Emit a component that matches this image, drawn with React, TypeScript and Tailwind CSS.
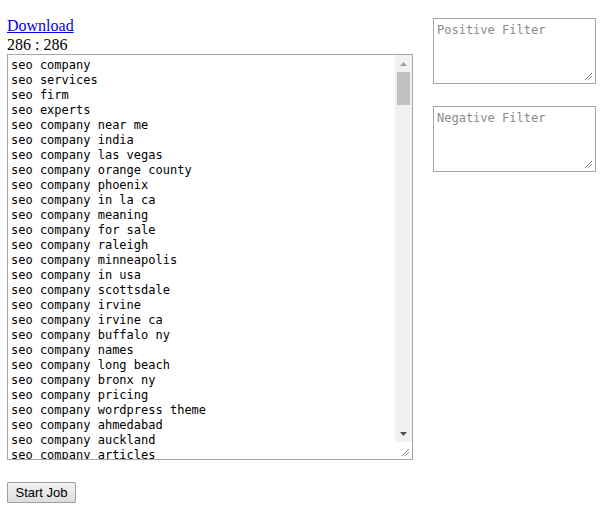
const keywords = [
  "seo company",
  "seo services",
  "seo firm",
  "seo experts",
  "seo company near me",
  "seo company india",
  "seo company las vegas",
  "seo company orange county",
  "seo company phoenix",
  "seo company in la ca",
  "seo company meaning",
  "seo company for sale",
  "seo company raleigh",
  "seo company minneapolis",
  "seo company in usa",
  "seo company scottsdale",
  "seo company irvine",
  "seo company irvine ca",
  "seo company buffalo ny",
  "seo company names",
  "seo company long beach",
  "seo company bronx ny",
  "seo company pricing",
  "seo company wordpress theme",
  "seo company ahmedabad",
  "seo company auckland",
  "seo company articles",
];

const mono = "font-['DejaVu_Sans_Mono','Liberation_Mono',monospace] text-[12px]";

function Grip() {
  return (
    <svg width="10" height="10" viewBox="0 0 10 10" className="absolute bottom-[2px] right-[2px]">
      <line x1="9" y1="2" x2="2" y2="9" stroke="#8a8a8a" strokeWidth="1" />
      <line x1="9" y1="5" x2="5" y2="9" stroke="#8a8a8a" strokeWidth="1" />
    </svg>
  );
}

function FilterBox({ placeholder }: { placeholder: string }) {
  return (
    <div className={`relative w-[163px] h-[66px] border border-[#a6a6a6] bg-white px-[3px] pt-[4px] leading-[15px] text-[#8a8a8a] ${mono}`}>
      {placeholder}
      <Grip />
    </div>
  );
}

export default function App() {
  return (
    <div className="w-[602px] h-[506px] bg-white flex flex-col pl-[7px]">
      <div className="flex gap-[20px]">
        <div className="flex flex-col pt-[17px] w-[406px]">
          <a href="#" className="font-['Liberation_Serif',serif] text-[16px] leading-[18px] text-[#0000ee] underline self-start">
            Download
          </a>
          <div className="font-['Liberation_Serif',serif] text-[16px] leading-[19px] text-black">286 : 286</div>
          <div className="relative flex w-[406px] h-[406px] border border-[#a6a6a6] bg-white overflow-hidden">
            <div className={`flex-1 pl-[3px] pt-[3px] leading-[15px] text-black whitespace-pre overflow-hidden ${mono}`}>
              {keywords.map((k) => (
                <div key={k}>{k}</div>
              ))}
            </div>
            <div className="w-[17px] flex flex-col bg-[#f1f1f1]">
              <div className="h-[17px] flex items-center justify-center">
                <svg width="7" height="4" viewBox="0 0 7 4">
                  <polygon points="3.5,0 7,4 0,4" fill="#a3a3a3" />
                </svg>
              </div>
              <div className="mx-[2px] h-[33px] bg-[#c1c1c1]" />
              <div className="flex-1" />
              <div className="h-[17px] flex items-center justify-center">
                <svg width="7" height="4" viewBox="0 0 7 4">
                  <polygon points="0,0 7,0 3.5,4" fill="#505050" />
                </svg>
              </div>
              <div className="h-[17px] bg-white relative">
                <Grip />
              </div>
            </div>
          </div>
        </div>
        <div className="flex flex-col gap-[22px] pt-[18px]">
          <FilterBox placeholder="Positive Filter" />
          <FilterBox placeholder="Negative Filter" />
        </div>
      </div>
      <button className="mt-[22px] self-start w-[69px] h-[21px] border border-[#a0a0a0] rounded-[1px] bg-gradient-to-b from-[#f3f3f3] to-[#dddddd] font-['Liberation_Sans',Arial,sans-serif] text-[13px] leading-[19px] text-black">
        Start Job
      </button>
    </div>
  );
}
